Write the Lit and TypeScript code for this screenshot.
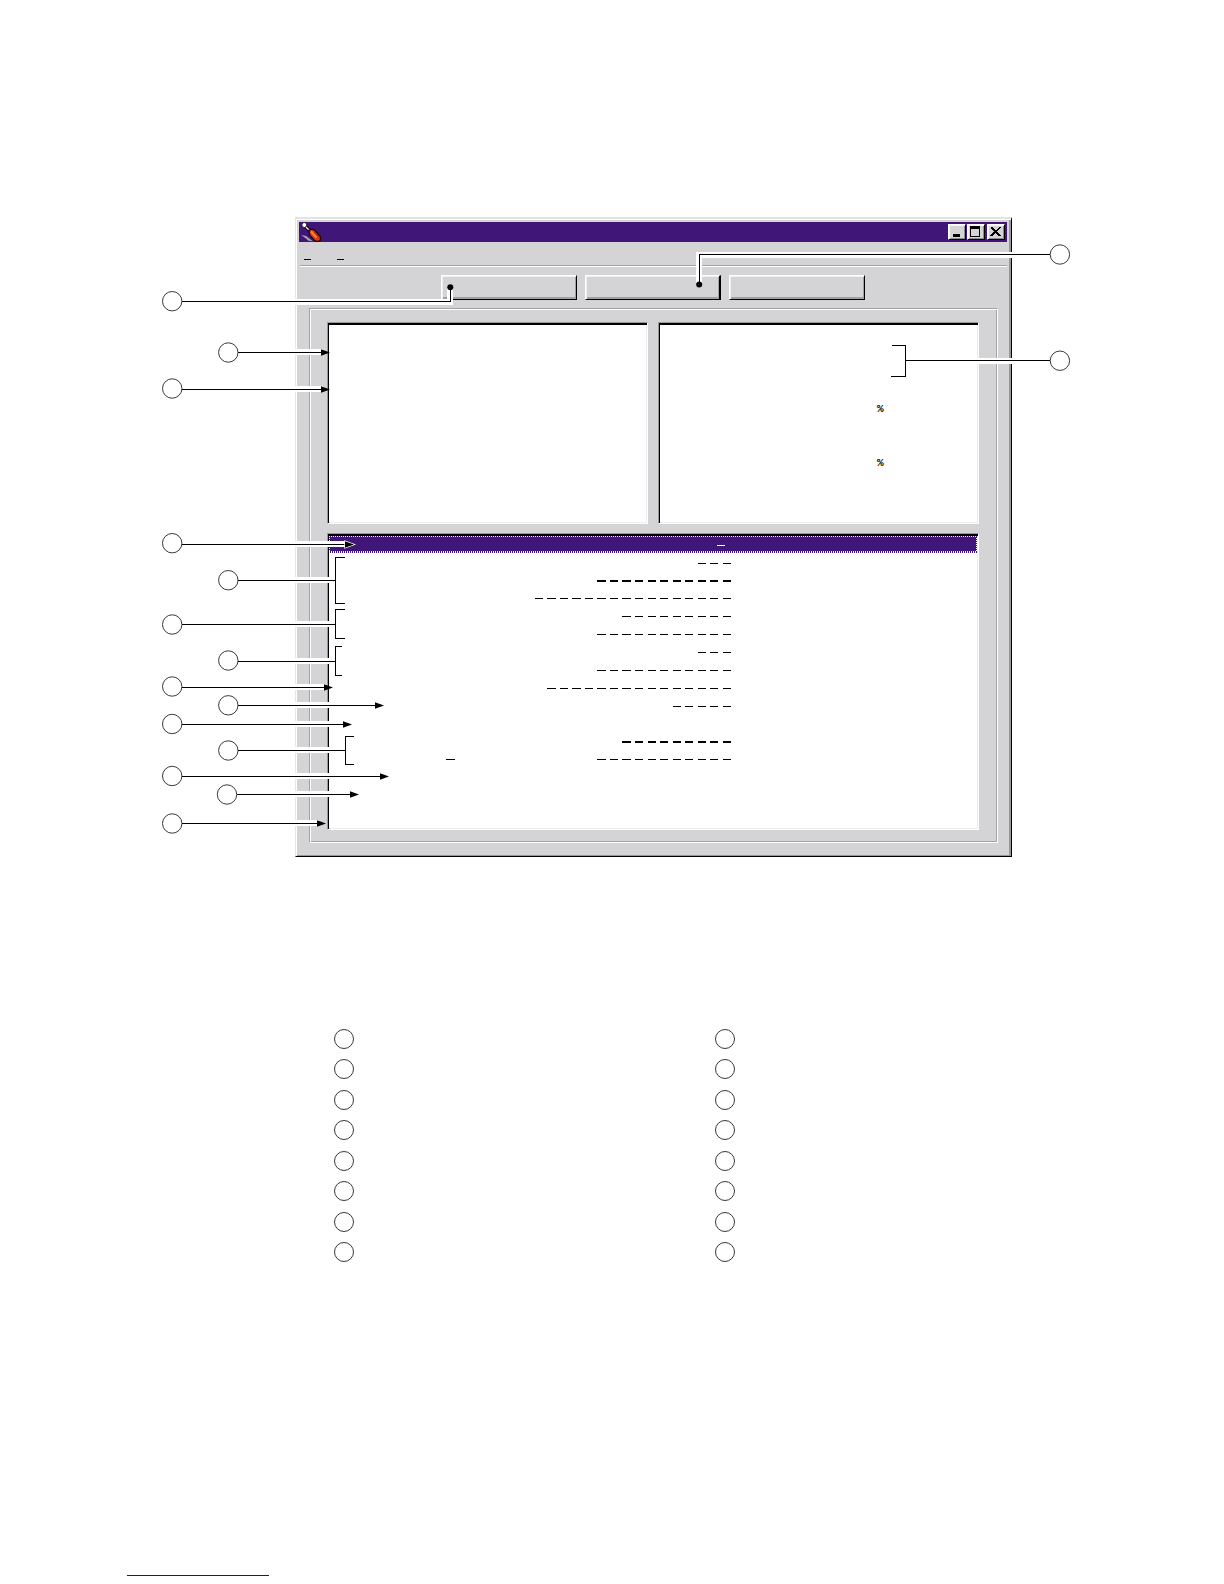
import { LitElement, html, svg, css, nothing } from "lit";
import { customElement } from "lit/decorators.js";

interface Callout {
  cx: number;
  cy: number;
  y: number;
  tip?: number;
  bracket?: { x: number; top: number; bottom: number; arm: number };
  light?: boolean;
}

interface Row {
  dashes: number;
  bold?: boolean;
  mark?: boolean;
}

const WINDOW_LEFT = 294;

const CALLOUTS: Callout[] = [
  { cx: 228.3, cy: 352.5, y: 352, tip: 330 },
  { cx: 172.2, cy: 388.5, y: 389, tip: 330 },
  { cx: 172.2, cy: 543.2, y: 544, tip: 354, light: true },
  { cx: 228.3, cy: 580.2, y: 580, bracket: { x: 335, top: 557, bottom: 603, arm: 345 } },
  { cx: 172.2, cy: 624.5, y: 624, bracket: { x: 335, top: 609, bottom: 638, arm: 345 } },
  { cx: 228.3, cy: 660.5, y: 661, bracket: { x: 335, top: 646, bottom: 675, arm: 342 } },
  { cx: 172.2, cy: 686.5, y: 687, tip: 333 },
  { cx: 228.3, cy: 705.3, y: 705, tip: 384 },
  { cx: 172.2, cy: 724, y: 724, tip: 352 },
  { cx: 228.3, cy: 750.5, y: 750, bracket: { x: 345, top: 736, bottom: 764, arm: 354 } },
  { cx: 172.2, cy: 776, y: 776, tip: 389 },
  { cx: 227, cy: 794.5, y: 794, tip: 359 },
  { cx: 172.2, cy: 823.5, y: 823, tip: 326 },
];

const ROWS: Row[] = [
  { dashes: 3 },
  { dashes: 11, bold: true },
  { dashes: 16 },
  { dashes: 9 },
  { dashes: 11 },
  { dashes: 3 },
  { dashes: 11 },
  { dashes: 15 },
  { dashes: 5 },
  { dashes: 0 },
  { dashes: 9, bold: true },
  { dashes: 11, mark: true },
];

@customElement("callout-layer")
export class CalloutLayer extends LitElement {
  static styles = css`
    :host { display: block; }
    .layer { display: block; width: 100%; height: 100%; overflow: visible; }
    .halo { fill: #fff; }
    .ink { fill: #000; }
    .light { stroke: #fff; stroke-width: 1.4; paint-order: stroke; }
    .ring { fill: #fff; stroke: #222; stroke-width: 0.9; }
    .crisp { shape-rendering: crispEdges; }
  `;

  private callout(c: Callout) {
    const start = c.cx + 9.8;
    const end = c.tip !== undefined ? c.tip - 7 : c.bracket!.x;
    const b = c.bracket;
    return svg`
      <g class="crisp">
        <rect class="halo" x=${WINDOW_LEFT} y=${c.y - 3} width=${end - WINDOW_LEFT} height="6"></rect>
        <rect class="ink" x=${start} y=${c.y} width=${end - start} height="1"></rect>
        ${b ? svg`
          <rect class="ink" x=${b.x} y=${b.top} width="1" height=${b.bottom - b.top + 1}></rect>
          <rect class="ink" x=${b.x} y=${b.top} width=${b.arm - b.x} height="1"></rect>
          <rect class="ink" x=${b.x} y=${b.bottom} width=${b.arm - b.x} height="1"></rect>` : nothing}
      </g>
      ${c.tip !== undefined ? svg`
        <path class=${c.light ? "ink light" : "ink"}
          d="M${c.tip - 9} ${c.y - 2.8} L${c.tip} ${c.y + 0.5} L${c.tip - 9} ${c.y + 3.8} Z"></path>` : nothing}
      <circle class="ring" cx=${c.cx} cy=${c.cy} r="9.7"></circle>`;
  }

  render() {
    return html`
      <svg class="layer" aria-hidden="true">
        <g class="crisp">
          <rect class="halo" x=${WINDOW_LEFT} y="299" width="159" height="6"></rect>
          <rect class="halo" x="447" y="288" width="6" height="17"></rect>
          <rect class="ink" x="182" y="301" width="269" height="1"></rect>
          <rect class="ink" x="450" y="287" width="1" height="15"></rect>
          <rect class="halo" x="696" y="252" width="317" height="6"></rect>
          <rect class="halo" x="696" y="252" width="6" height="31"></rect>
          <rect class="ink" x="699" y="254" width="351" height="1"></rect>
          <rect class="ink" x="699" y="254" width="1" height="30"></rect>
          <rect class="halo" x="906" y="358" width="107" height="6"></rect>
          <rect class="ink" x="905" y="360" width="145" height="1"></rect>
          <rect class="ink" x="905" y="345" width="1" height="32"></rect>
          <rect class="ink" x="892" y="345" width="14" height="1"></rect>
          <rect class="ink" x="891" y="376" width="15" height="1"></rect>
        </g>
        <circle class="ink" cx="450.3" cy="287.3" r="3"></circle>
        <circle class="ink" cx="699.2" cy="284.6" r="3"></circle>
        <circle class="ring" cx="172.2" cy="301.2" r="9.7"></circle>
        <circle class="ring" cx="1059.9" cy="254.5" r="9.7"></circle>
        <circle class="ring" cx="1059.9" cy="360.7" r="9.7"></circle>
        ${CALLOUTS.map((c) => this.callout(c))}
      </svg>`;
  }
}

@customElement("app-window")
export class AppWindow extends LitElement {
  static styles = css`
    :host { display: block; }
    * { box-sizing: border-box; }
    button { font: inherit; padding: 0; margin: 0; border-radius: 0; }
    .window {
      background: #d4d4d6;
      border-style: solid;
      border-width: 2px 1px 1px;
      border-color: #e3e3e4 #000 #000 #e6e6e8;
      box-shadow: inset 1px 1px #fff, inset -2px -1px #98989b;
      padding: 3px 4px 13px 3px;
    }
    .titlebar {
      display: flex;
      align-items: center;
      justify-content: space-between;
      height: 20px;
      padding: 0 2px 0 1px;
      background: #401779;
    }
    .logo { display: block; width: 22px; height: 20px; }
    .controls { display: flex; gap: 1px; }
    .control {
      width: 18px;
      height: 16px;
      background: #d4d4d6;
      border: 1px solid;
      border-color: #fff #000 #000 #fff;
      box-shadow: inset 1px 1px #f4f4f4, inset -1px -1px #8c8c8f;
    }
    .control:last-child { margin-left: 1px; }
    .glyph { display: block; width: 16px; height: 14px; shape-rendering: crispEdges; }
    .menubar { display: flex; gap: 26px; height: 23px; padding-left: 5px; }
    .menu { width: 7px; height: 18px; background: none; border: 0; border-bottom: 1px solid #000; }
    .rule { height: 2px; margin: 0 0 0 1px; border: 0; border-top: 1px solid #a2a2a5; background: #fff; }
    .toolbar { display: flex; justify-content: center; gap: 8px; padding: 8px 0; }
    .tool {
      width: 136px;
      height: 25px;
      background: #d4d4d6;
      border: 1px solid;
      border-color: #fff #000 #000 #fff;
      box-shadow: inset 1px 1px #f0f0f2, inset -1px -2px #a0a0a3;
    }
    .tool.default { border-right-width: 2px; }
    .group {
      margin: 0 9px 0 10px;
      padding: 13px 18px 12px 17px;
      border: 1px solid;
      border-color: #a2a2a5 #fff #fff #a2a2a5;
      box-shadow: inset 1px 1px #fff, inset -1px -1px #a2a2a5;
      display: flex;
      flex-direction: column;
      gap: 9px;
    }
    .panels { display: grid; grid-template-columns: 1fr 1fr; gap: 10px; }
    .sunken {
      background: #fff;
      border: 1px solid;
      border-color: #98989b #fff #fff #98989b;
      box-shadow: inset 1px 2px #000, inset -1px -1px #ececee;
      padding: 2px 1px 1px;
    }
    .panel { min-height: 202px; }
    .readings {
      display: flex;
      flex-direction: column;
      gap: 36px;
      padding: 75px 0 0 217px;
      font: bold 11px/18px "Liberation Mono", monospace;
      color: #000;
    }
    .list { min-height: 297px; }
    .selected {
      height: 17px;
      background:
        repeating-linear-gradient(90deg, #fff 0 1px, #401779 1px 2px) top / 100% 1px no-repeat,
        repeating-linear-gradient(90deg, #fff 0 1px, #401779 1px 2px) bottom / 100% 2px no-repeat,
        repeating-linear-gradient(#fff 0 1px, #401779 1px 2px) left / 1px 100% no-repeat,
        repeating-linear-gradient(#fff 0 1px, #401779 1px 2px) right / 1px 100% no-repeat,
        #401779;
      margin-bottom: 1px;
    }
    .row { height: 18px; }
    .row.bold { height: 17px; }
    .marks { display: block; width: 402px; height: 17px; fill: #000; shape-rendering: crispEdges; }
    .selected .marks { fill: #fff; }
  `;

  private row(r: Row) {
    const height = r.bold ? 2 : 1;
    const y = r.bold ? 8 : 9;
    return html`
      <div class=${r.bold ? "row bold" : "row"}>
        <svg class="marks" aria-hidden="true">
          ${r.mark ? svg`<rect x="117" y=${y} width="9" height="1"></rect>` : nothing}
          ${Array.from({ length: r.dashes }, (_, i) => {
            const left = Math.floor(394.3 - i * 12.55);
            const right = Math.floor(402 - i * 12.5);
            return svg`<rect x=${left} y=${y} width=${right - left} height=${height}></rect>`;
          })}
        </svg>
      </div>`;
  }

  render() {
    return html`
      <section class="window">
        <header class="titlebar">
          <svg class="logo" viewBox="0 0 22 20" aria-hidden="true">
            <path d="M1 13 L6 14 L13 19.5 L8 18.5 L6 16.5 Z" fill="#a9a3b5"></path>
            <path d="M5 4 L10.5 9.5" stroke="#000" stroke-width="3.2"></path>
            <path d="M5 4 L10.5 9.5" stroke="#e8e4ee" stroke-width="1.5"></path>
            <circle cx="4.3" cy="3" r="2.5" fill="#fff" stroke="#111" stroke-width="0.9"></circle>
            <path d="M8.8 8.3 L12 7 L15 8.5 L20.3 14.5 L20.5 18 L18.5 19.6 L15 19 L9.6 13.2 Z" fill="#d8381c" stroke="#160408" stroke-width="1.3"></path>
            <path d="M11 9.5 L16.5 15.5" stroke="#ef8a34" stroke-width="2"></path>
            <path d="M14 10 L18.5 15" stroke="#b81f1c" stroke-width="1"></path>
          </svg>
          <div class="controls">
            <button class="control" aria-label="Minimize">
              <svg class="glyph"><rect x="4" y="9" width="7" height="3"></rect></svg>
            </button>
            <button class="control" aria-label="Maximize">
              <svg class="glyph"><path fill-rule="evenodd" d="M2 1h10v11h-10z M3 4v7h8v-7z"></path></svg>
            </button>
            <button class="control" aria-label="Close">
              <svg class="glyph"><path d="M3 2h2v1h1v1h1v1h2v-1h1v-1h1v-1h2v1h-1v1h-1v1h-1v1h-1v1h1v1h1v1h1v1h1v1h-3v-1h-1v-1h-1v-1h-1v1h-1v1h-1v1h-3v-1h1v-1h1v-1h1v-1h1v-1h-1v-1h-1v-1h-1v-1h-1z"></path></svg>
            </button>
          </div>
        </header>
        <nav class="menubar">
          <button class="menu" aria-label="First menu"></button>
          <button class="menu" aria-label="Second menu"></button>
        </nav>
        <hr class="rule" />
        <div class="toolbar">
          <button class="tool" aria-label="First action"></button>
          <button class="tool default" aria-label="Second action"></button>
          <button class="tool" aria-label="Third action"></button>
        </div>
        <div class="group">
          <div class="panels">
            <div class="sunken panel"></div>
            <div class="sunken panel">
              <div class="readings"><span>%</span><span>%</span></div>
            </div>
          </div>
          <div class="sunken list">
            <div class="selected">
              <svg class="marks" aria-hidden="true"><rect x="388" y="9" width="8" height="1"></rect></svg>
            </div>
            ${ROWS.map((r) => this.row(r))}
          </div>
        </div>
      </section>`;
  }
}

@customElement("app-root")
export class AppRoot extends LitElement {
  static styles = css`
    :host {
      display: block;
      background: #fff;
      font-family: "Liberation Sans", sans-serif;
    }
    * { box-sizing: border-box; }
    .page {
      position: relative;
      display: flex;
      flex-direction: column;
      max-width: 1224px;
      min-height: 1584px;
      margin: 0 auto;
    }
    .figure { margin: 217px 212px 0 295px; }
    .callouts { position: absolute; inset: 0; pointer-events: none; }
    .legend {
      display: grid;
      grid-template-columns: 1fr 1fr;
      padding: 172px 128px 0 334px;
    }
    .keys {
      display: flex;
      flex-direction: column;
      justify-content: space-between;
      min-height: 233px;
      margin: 0;
      padding: 0;
      list-style: none;
    }
    .key { height: 20px; }
    .ring { display: block; width: 20px; height: 20px; fill: none; stroke: #222; stroke-width: 0.9; }
    .footer { margin-top: auto; padding: 0 127px 8px; }
    .link { display: block; width: 142px; height: 16px; border-bottom: 1px solid #14148c; }
  `;

  private keys() {
    return html`
      <ul class="keys">
        ${Array.from({ length: 8 }, () => html`
          <li class="key">
            <svg class="ring" viewBox="0 0 20 20" aria-hidden="true"><circle cx="10" cy="10" r="9.5"></circle></svg>
          </li>`)}
      </ul>`;
  }

  render() {
    return html`
      <main class="page">
        <app-window class="figure"></app-window>
        <callout-layer class="callouts"></callout-layer>
        <div class="legend">${this.keys()}${this.keys()}</div>
        <footer class="footer"><a class="link" href="#" aria-label="Website"></a></footer>
      </main>`;
  }
}
